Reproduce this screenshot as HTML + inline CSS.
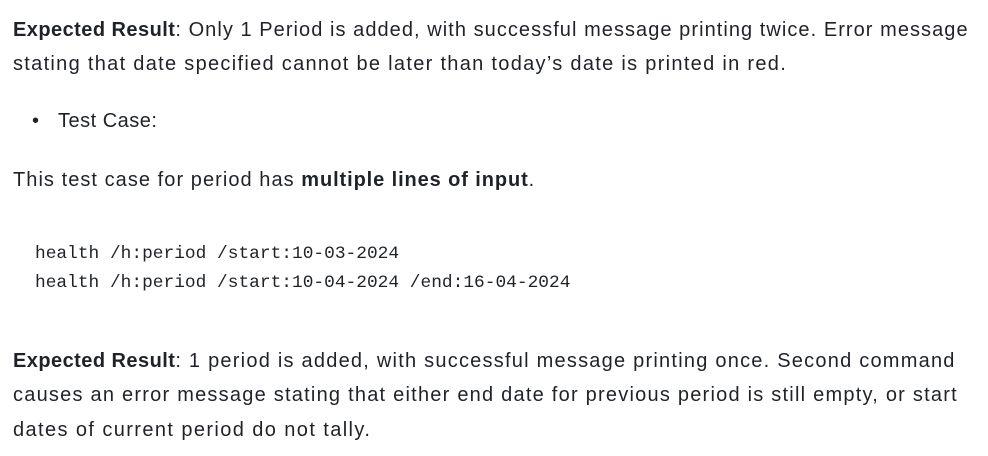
<!DOCTYPE html>
<html><head><meta charset="utf-8"><style>
body{margin:0;background:#fff;width:988px;height:456px;overflow:hidden;font-family:"Liberation Sans","DejaVu Sans",sans-serif;color:#1f2328;font-size:20px;letter-spacing:1.05px}
.l{position:absolute;left:13px;white-space:nowrap;line-height:24px}
.c{position:absolute;left:35px;white-space:nowrap;font-family:"Liberation Mono",monospace;font-size:17.85px;line-height:22px;letter-spacing:0}
b{font-weight:bold;letter-spacing:0.9px}
b.e{letter-spacing:0.45px}
</style></head><body>
<div class="l" style="top:18px"><b class="e">Expected Result</b>: Only 1 Period is added, with successful message printing twice. Error message</div>
<div class="l" style="top:52px;letter-spacing:1.3px">stating that date specified cannot be later than today’s date is printed in red.</div>
<div class="l" style="top:109px;left:32px">•</div>
<div class="l" style="top:109px;left:58px;letter-spacing:0.5px">Test Case:</div>
<div class="l" style="top:168px">This test case for period has <b>multiple lines of input</b>.</div>
<div class="c" style="top:243px">health /h:period /start:10-03-2024</div>
<div class="c" style="top:272px">health /h:period /start:10-04-2024 /end:16-04-2024</div>
<div class="l" style="top:349px;letter-spacing:1.23px"><b class="e">Expected Result</b>: 1 period is added, with successful message printing once. Second command</div>
<div class="l" style="top:383px;letter-spacing:1.23px">causes an error message stating that either end date for previous period is still empty, or start</div>
<div class="l" style="top:418px;letter-spacing:1.4px">dates of current period do not tally.</div>
</body></html>
